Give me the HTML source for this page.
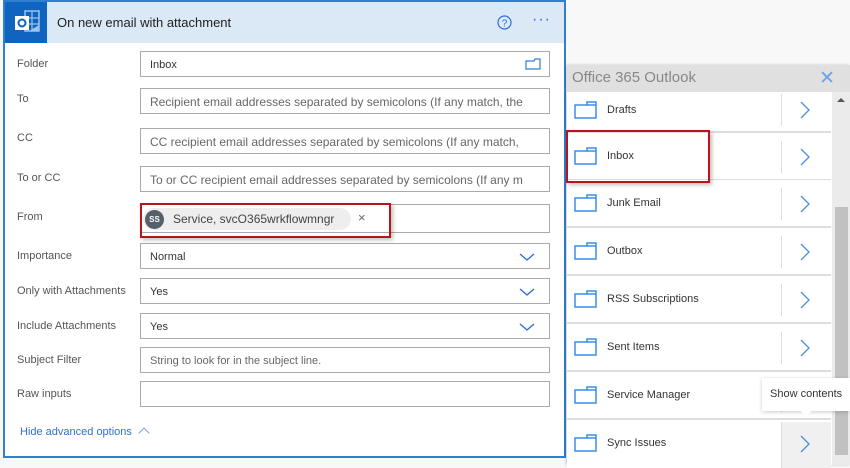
<!DOCTYPE html>
<html><head><style>
*{box-sizing:border-box;margin:0;padding:0}
body{width:850px;height:465px;background:#f8f8f8;font-family:"Liberation Sans",sans-serif;position:relative;overflow:hidden;color:#333}
.card{position:absolute;left:3px;top:0;width:563px;height:458px;border:2px solid #2f7fd2;background:#fff}
.hdr{position:absolute;left:0;top:0;width:559px;height:41px;background:#dbe9f7}
.ico{position:absolute;left:0;top:0;width:42px;height:41px;background:#0f64c0}
.title{position:absolute;left:52px;top:13px;font-size:13px;color:#222}
.lbl{position:absolute;left:12px;font-size:11px;color:#555}
.in{position:absolute;left:135px;width:410px;height:26px;border:1px solid #aaa;background:#fff;font-size:11px;color:#333;padding:7px 9px;white-space:nowrap;overflow:hidden}
.ph{color:#666;font-size:12px;padding-top:6px}
.chev{position:absolute;right:14px;top:8px}
.panel{position:absolute;left:567px;top:65px;width:283px;height:400px;background:#fff;box-shadow:-1px 0 3px rgba(0,0,0,.2)}
.ph2{position:absolute;left:0;top:0;width:283px;height:27px;background:#e0e0e0;font-size:15px;color:#888;padding:4px 5px;z-index:2}
.row{position:absolute;left:0;width:264px;height:48px;border-bottom:2px solid #ddd;background:#fff}
.row .t{position:absolute;left:40px;top:17px;font-size:11px;color:#333}
.row .f{position:absolute;left:7px;top:13px}
.row .sep{position:absolute;left:214px;top:8px;width:1px;height:32px;background:#ddd}
.row .c{position:absolute;left:233px;top:15px}
.sb{position:absolute;left:832px;top:92px;width:18px;height:373px;background:#ebebeb}
.red{position:absolute;border:2px solid #b5151b;box-shadow:2px 2px 4px rgba(0,0,0,.25)}
</style></head><body>
<div class="card">
 <div class="hdr"></div>
 <div class="ico"><svg width="42" height="41"><rect x="20" y="9" width="14" height="20" fill="none" stroke="#9cc3ec" stroke-width="1.5"/><path d="M20 16h14M20 22h14M27 9v20" stroke="#9cc3ec" stroke-width="1.2"/><rect x="10" y="14" width="14" height="14" fill="#fff"/><circle cx="17" cy="21" r="3.5" fill="none" stroke="#0f64c0" stroke-width="2"/><path d="M24 29l10-6v6z" fill="#9cc3ec"/></svg></div>
 <div class="title">On new email with attachment</div>
 <svg style="position:absolute;left:492px;top:13px" width="15" height="15"><circle cx="7.5" cy="7.5" r="6.5" fill="none" stroke="#2f6ed8" stroke-width="1.2"/><text x="7.5" y="11.5" font-size="10" text-anchor="middle" fill="#2f6ed8" font-family="Liberation Sans">?</text></svg>
 <div style="position:absolute;left:527px;top:9px;font-size:16px;color:#2f6ed8;letter-spacing:1px">···</div>
 <div class="lbl" style="top:56px">Folder</div>
 <div class="in" style="top:49px">Inbox<svg class="chev" style="top:6px;right:8px" width="16" height="12"><path d="M1 3h8l1-2h5v10H1z" fill="none" stroke="#2f7fd2" stroke-width="1.2"/></svg></div>
 <div class="lbl" style="top:91px">To</div>
 <div class="in ph" style="top:86px">Recipient email addresses separated by semicolons (If any match, the</div>
 <div class="lbl" style="top:130px">CC</div>
 <div class="in ph" style="top:126px">CC recipient email addresses separated by semicolons (If any match,</div>
 <div class="lbl" style="top:170px">To or CC</div>
 <div class="in ph" style="top:164px">To or CC recipient email addresses separated by semicolons (If any m</div>
 <div class="lbl" style="top:209px">From</div>
 <div class="in" style="top:202px;height:29px"></div>
 <div style="position:absolute;left:138px;top:206px;width:208px;height:22px;border-radius:11px;background:#eee"></div>
 <div style="position:absolute;left:140px;top:208px;width:19px;height:19px;border-radius:50%;background:#55606a;color:#fff;font-size:8px;text-align:center;line-height:19px;font-weight:bold">SS</div>
 <div style="position:absolute;left:168px;top:210px;font-size:12px;color:#444">Service, svcO365wrkflowmngr</div>
 <div style="position:absolute;left:353px;top:208px;font-size:13px;color:#666">×</div>
 <div class="lbl" style="top:248px">Importance</div>
 <div class="in" style="top:241px">Normal<svg class="chev" width="16" height="10"><path d="M1 2l7 6 7-6" fill="none" stroke="#2f6ed8" stroke-width="1.4"/></svg></div>
 <div class="lbl" style="top:283px">Only with Attachments</div>
 <div class="in" style="top:276px">Yes<svg class="chev" width="16" height="10"><path d="M1 2l7 6 7-6" fill="none" stroke="#2f6ed8" stroke-width="1.4"/></svg></div>
 <div class="lbl" style="top:318px">Include Attachments</div>
 <div class="in" style="top:311px">Yes<svg class="chev" width="16" height="10"><path d="M1 2l7 6 7-6" fill="none" stroke="#2f6ed8" stroke-width="1.4"/></svg></div>
 <div class="lbl" style="top:352px">Subject Filter</div>
 <div class="in ph" style="top:345px;font-size:11px;padding-top:7px">String to look for in the subject line.</div>
 <div class="lbl" style="top:386px">Raw inputs</div>
 <div class="in" style="top:379px"></div>
 <div style="position:absolute;left:15px;top:424px;font-size:11px;color:#2f6ed8">Hide advanced options <span style="display:inline-block;margin-left:5px;width:8px;height:8px;border-left:1.3px solid #7aa6e8;border-top:1.3px solid #7aa6e8;transform:rotate(45deg);position:relative;top:2px"></span></div>
</div>
<div class="red" style="left:140px;top:203px;width:251px;height:35px"></div>
<div class="panel">
 <div class="ph2">Office 365 Outlook<span style="position:absolute;right:15px;top:2px;color:#6aa3e6;font-size:19px">✕</span></div>
 <div class="row" style="top:27px;height:41px"><svg class="f" style="top:8px" width="24" height="20"><path d="M1 5h12v-3h9v16H1z" fill="none" stroke="#3a8ee6" stroke-width="1.5"/><path d="M13 5h9" stroke="#3a8ee6" stroke-width="1.5"/></svg><span class="t" style="top:12px">Drafts</span><i class="sep" style="top:2px"></i><svg class="c" style="top:9px" width="10" height="18"><path d="M1 1l8 8-8 8" fill="none" stroke="#4a8fe0" stroke-width="1.3"/></svg></div>
 <div class="row" style="top:68px"><svg class="f" width="24" height="20"><path d="M1 5h12v-3h9v16H1z" fill="none" stroke="#3a8ee6" stroke-width="1.5"/><path d="M13 5h9" stroke="#3a8ee6" stroke-width="1.5"/></svg><span class="t">Inbox</span><i class="sep"></i><svg class="c" width="10" height="18"><path d="M1 1l8 8-8 8" fill="none" stroke="#4a8fe0" stroke-width="1.3"/></svg></div>
 <div class="row" style="top:115px"><svg class="f" width="24" height="20"><path d="M1 5h12v-3h9v16H1z" fill="none" stroke="#3a8ee6" stroke-width="1.5"/><path d="M13 5h9" stroke="#3a8ee6" stroke-width="1.5"/></svg><span class="t">Junk Email</span><i class="sep"></i><svg class="c" width="10" height="18"><path d="M1 1l8 8-8 8" fill="none" stroke="#4a8fe0" stroke-width="1.3"/></svg></div>
 <div class="row" style="top:163px"><svg class="f" width="24" height="20"><path d="M1 5h12v-3h9v16H1z" fill="none" stroke="#3a8ee6" stroke-width="1.5"/><path d="M13 5h9" stroke="#3a8ee6" stroke-width="1.5"/></svg><span class="t">Outbox</span><i class="sep"></i><svg class="c" width="10" height="18"><path d="M1 1l8 8-8 8" fill="none" stroke="#4a8fe0" stroke-width="1.3"/></svg></div>
 <div class="row" style="top:211px"><svg class="f" width="24" height="20"><path d="M1 5h12v-3h9v16H1z" fill="none" stroke="#3a8ee6" stroke-width="1.5"/><path d="M13 5h9" stroke="#3a8ee6" stroke-width="1.5"/></svg><span class="t">RSS Subscriptions</span><i class="sep"></i><svg class="c" width="10" height="18"><path d="M1 1l8 8-8 8" fill="none" stroke="#4a8fe0" stroke-width="1.3"/></svg></div>
 <div class="row" style="top:259px"><svg class="f" width="24" height="20"><path d="M1 5h12v-3h9v16H1z" fill="none" stroke="#3a8ee6" stroke-width="1.5"/><path d="M13 5h9" stroke="#3a8ee6" stroke-width="1.5"/></svg><span class="t">Sent Items</span><i class="sep"></i><svg class="c" width="10" height="18"><path d="M1 1l8 8-8 8" fill="none" stroke="#4a8fe0" stroke-width="1.3"/></svg></div>
 <div class="row" style="top:307px"><svg class="f" width="24" height="20"><path d="M1 5h12v-3h9v16H1z" fill="none" stroke="#3a8ee6" stroke-width="1.5"/><path d="M13 5h9" stroke="#3a8ee6" stroke-width="1.5"/></svg><span class="t">Service Manager</span><i class="sep"></i></div>
 <div class="row" style="top:355px;border-bottom:none"><svg class="f" width="24" height="20"><path d="M1 5h12v-3h9v16H1z" fill="none" stroke="#3a8ee6" stroke-width="1.5"/><path d="M13 5h9" stroke="#3a8ee6" stroke-width="1.5"/></svg><span class="t">Sync Issues</span><div style="position:absolute;left:214px;top:2px;width:50px;height:46px;background:#f0f0f0;border-left:1px solid #ddd"></div><svg class="c" width="10" height="18"><path d="M1 1l8 8-8 8" fill="none" stroke="#4a8fe0" stroke-width="1.3"/></svg></div>
</div>
<div class="sb"><div style="position:absolute;left:3px;top:115px;width:13px;height:248px;background:#c1c1c1"></div><div style="position:absolute;left:5px;top:6px;border:4px solid transparent;border-bottom:4px solid #555;border-top:none"></div></div>
<div class="red" style="left:566px;top:130px;width:144px;height:53px"></div>
<div style="position:absolute;left:762px;top:378px;width:88px;height:33px;background:#fff;box-shadow:0 1px 4px rgba(0,0,0,.2);font-size:11px;color:#333;padding:10px 0 0 8px">Show contents</div>
<div style="position:absolute;left:800px;top:410px;border:6px solid transparent;border-top:7px solid #fff"></div>
</body></html>
